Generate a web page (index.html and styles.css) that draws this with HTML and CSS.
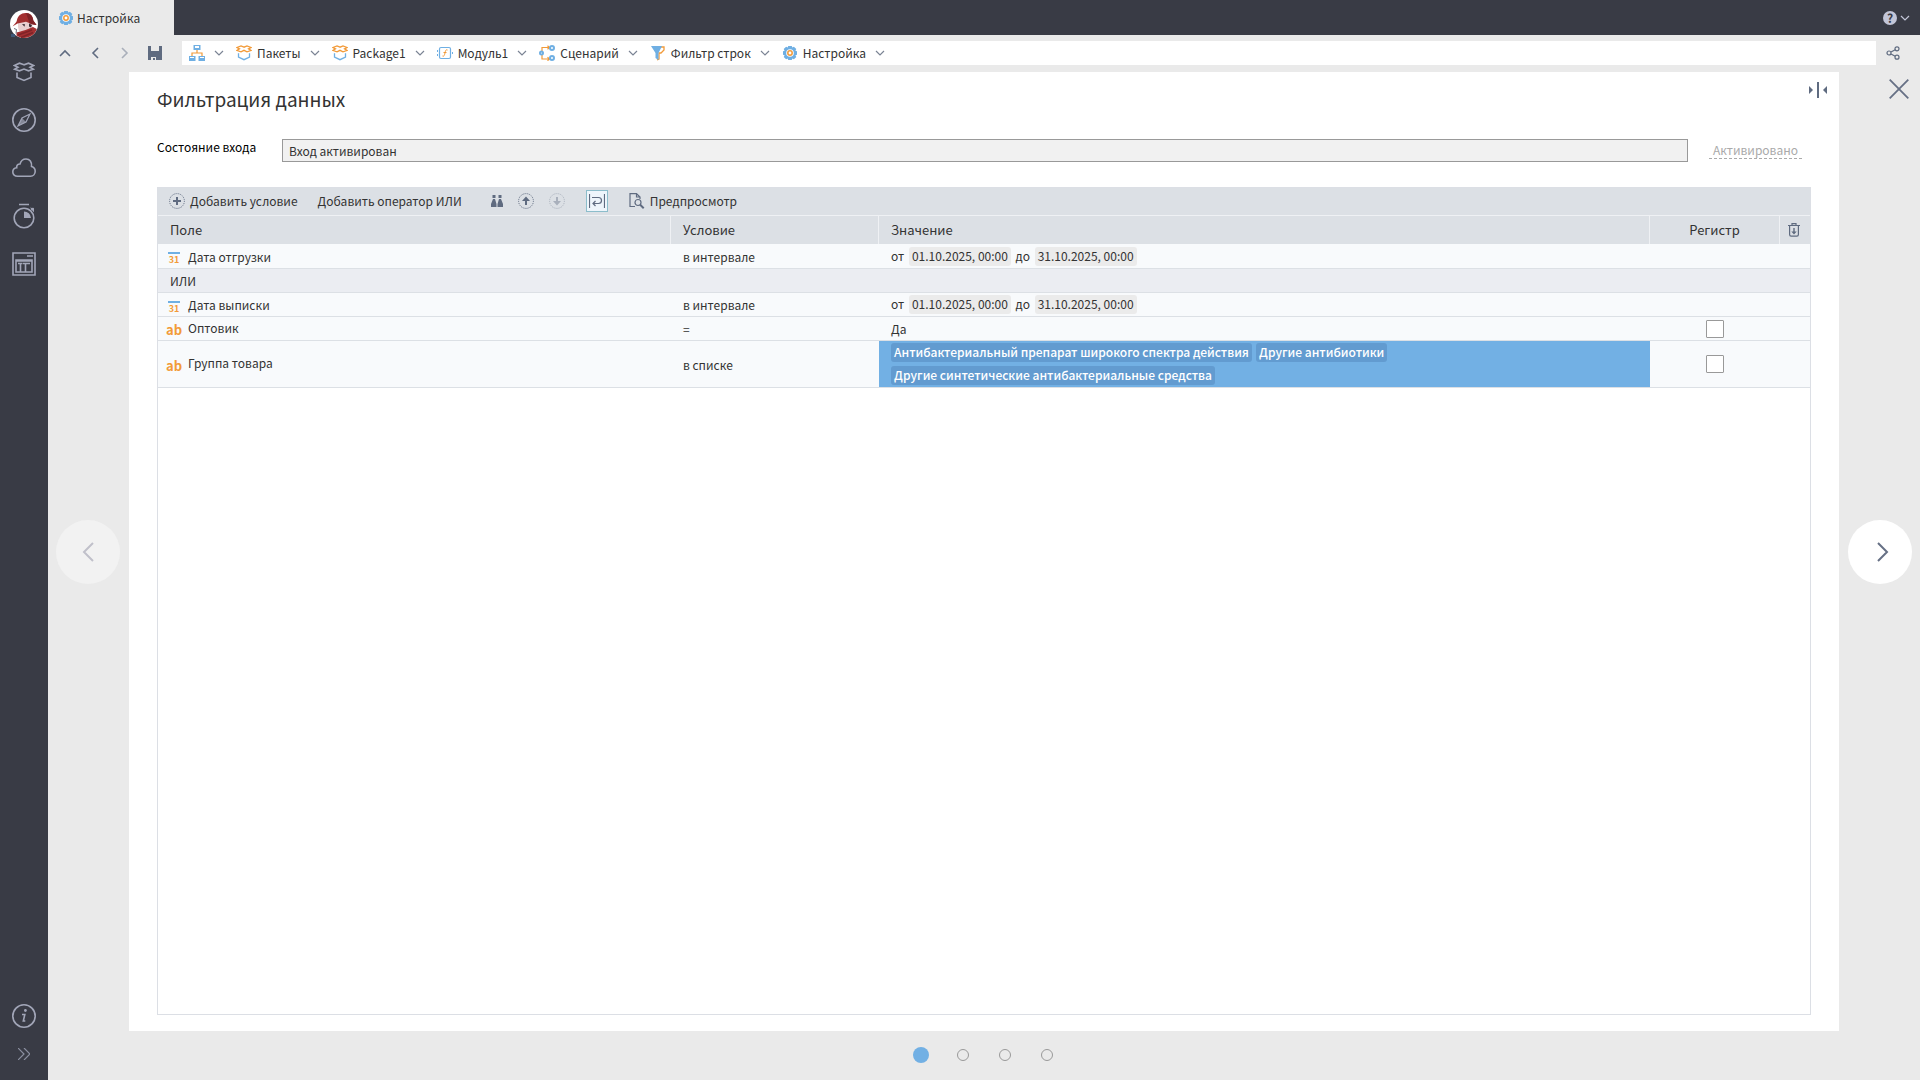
FILE: index.html
```html
<!DOCTYPE html>
<html lang="ru">
<head>
  <meta charset="UTF-8">
  <meta name="viewport" content="width=device-width, initial-scale=1.0">
  <title>Настройка</title>
  <link rel="stylesheet" href="styles.css">
</head>
<body>
<div class="app">
  <nav class="sidebar">
    <a href="#" class="side-item" aria-label="Главная">
      <svg width="28" height="28" viewBox="0 0 28 28">
        <circle cx="14" cy="14" r="14" fill="#fff"/>
        <path d="M8 13l6-2 8 3 1 4-6 4-8-1-1-4z" fill="#e9cfd0"/>
        <path d="M2.500 16.500C5 13.500 6.500 12.500 7 10c.8-4 4-6.800 8.500-7 4.500-.2 7.500 3 7.800 7.500l3.200 4.500-4.500-.8-6-2.500-8.500 1.800z" fill="#a32f31"/>
        <path d="M16 3c4 0 7 3 7.300 7.500l3.200 4.500-4.500-.8-2.500-1z" fill="#7f2327"/>
        <path d="M12 14l3 .2-.5 2.500zM19 13.500l3 1.500-1 2.500-2-1z" fill="#3b2c35"/>
        <path d="M6.500 22.500l9-2.500 7.500-3 3.800 2C25 24.500 20 28 14 28c-3 0-5.500-1-7.500-2.500z" fill="#a32f31"/>
        <path d="M8 25l14-5M11 27.500l12-5" stroke="#7f2327" fill="none"/>
        <path d="M4 18.500l2.500 1-.5 4" fill="none" stroke="#4a4a5a" stroke-width=".8"/>
        <path d="M1 24h4v3H1z" fill="#3d5878"/>
      </svg>
    </a>
    <a href="#" class="side-item" aria-label="Пакеты">
      <svg width="22" height="20" viewBox="0 0 22 20"><path d="M11 2.800L6.500 1.200 1.500 3.500 5 5.200 1.500 7.200l5 1.600L11 7l4.500 1.800 5-1.600L17 5.200l3.500-1.700-5-2.300zM4 10.500v5l7 3 7-3v-5"/></svg>
    </a>
    <a href="#" class="side-item" aria-label="Сценарии">
      <svg width="24" height="24" viewBox="0 0 24 24"><circle cx="12" cy="12" r="11.200"/><path d="M18 6l-4 8-8 4 4-8z" stroke-width="1.200"/><path d="M10 10l4 4-8 4z" fill="currentColor" stroke="none" opacity=".7"/></svg>
    </a>
    <a href="#" class="side-item" aria-label="Облако">
      <svg width="24" height="20" viewBox="0 0 24 20"><path d="M5.500 18.200C2.800 18.200.8 16.500.8 14c0-2.300 1.500-4 3.900-4.300-.3-2 1-3.800 3.300-3.700C8.800 3 11 1 14 1c3.800 0 6 3 5.500 7.500 2.500.7 3.700 2.600 3.700 4.700 0 2.800-1.900 5-4.700 5z"/></svg>
    </a>
    <a href="#" class="side-item" aria-label="Расписание">
      <svg width="24" height="26" viewBox="0 0 24 26"><circle cx="12" cy="15" r="9.800"/><path d="M7 1.500h10M19.500 7l2-2"/><path d="M12 8.500V15h7a7 7 0 0 0-7-6.500zM18 4.500l4 1v4z" fill="currentColor" stroke="none"/></svg>
    </a>
    <a href="#" class="side-item" aria-label="Таблицы">
      <svg width="24" height="24" viewBox="0 0 24 24"><path d="M1 1h22v22H1zM4 8v12h16V8zM4 9h16M8.500 20v-8.500h2M13.500 20v-8.500h2M18 11.500h-2.500M15 4h6M6 11.500h2.500M11 11.500h2.500"/></svg>
    </a>
    <a href="#" class="side-item side-info" aria-label="Информация">
      <svg width="24" height="24" viewBox="0 0 24 24"><circle cx="12" cy="12" r="11.200"/><circle cx="13.400" cy="6.500" r="1.400" fill="currentColor" stroke="none"/><path d="M10 10.500h2.800l-1.500 6.500h2"/></svg>
    </a>
    <button class="side-expand" aria-label="Развернуть">
      <svg width="12" height="12" viewBox="0 0 12 12"><path d="M0 0l6 6-6 6M6 0l6 6-6 6" fill="none" stroke="currentColor" stroke-width="1.200"/></svg>
    </button>
  </nav>

  <div class="workspace">
    <header class="topbar">
      <a href="#" class="tab"><svg width="16" height="16"><use href="#i-gear"/></svg>Настройка</a>
      <button class="help" aria-label="Справка">
        <span class="help-mark">?</span>
        <svg width="10" height="6"><use href="#i-down"/></svg>
      </button>
    </header>

    <div class="navbar">
      <button class="nav-btn" aria-label="Вверх"><svg width="12" height="8" viewBox="0 0 12 8"><path d="M1 7l5-5 5 5"/></svg></button>
      <button class="nav-btn" aria-label="Назад"><svg width="8" height="12" viewBox="0 0 8 12"><path d="M7 1L2 6l5 5"/></svg></button>
      <button class="nav-btn" aria-label="Вперёд" disabled><svg width="8" height="12" viewBox="0 0 8 12"><path d="M1 1l5 5-5 5"/></svg></button>
      <button class="nav-btn" aria-label="Сохранить"><svg width="14" height="14" viewBox="0 0 14 14"><path d="M0 0h3v5h8V0h3v14h-3v-4H3v4H0z" fill="currentColor" stroke="none"/><path d="M5 12h2v2H5zM8 10h3v4H8zM3 10h8v1H3z" fill="currentColor" stroke="none"/></svg></button>

      <nav class="crumbs">
        <button class="crumb" aria-label="Дерево">
          <svg width="16" height="16" viewBox="0 0 16 16"><path d="M8 5v3M3 11V8h10v3" fill="none" stroke="#f29a38" stroke-width="1.200"/><path d="M4.500 0h7v5h-7zM0 11h6.500v5H0zM9.500 11H16v5H9.500z" fill="#6fafe3"/><path d="M6 1h4v2H6zM1 12h4v1H1zM11 12h4v1h-4z" fill="#fff"/></svg>
          <svg class="arrow" width="10" height="6"><use href="#i-down"/></svg>
        </button>
        <button class="crumb"><svg width="16" height="16"><use href="#i-package"/></svg>Пакеты<svg class="arrow" width="10" height="6"><use href="#i-down"/></svg></button>
        <button class="crumb"><svg width="16" height="16"><use href="#i-package"/></svg>Package1<svg class="arrow" width="10" height="6"><use href="#i-down"/></svg></button>
        <button class="crumb">
          <svg width="16" height="16" viewBox="0 0 16 16"><rect x="2.500" y="2.500" width="11" height="11" rx="1.500" fill="none" stroke="#6fafe3" stroke-width="1.200"/><path d="M0 5h1v2H0zM0 9h1v2H0zM15 7h1v2h-1z" fill="#6fafe3"/><path d="M10.500 5c-2-.8-2 1-2.500 3s-.8 3.800-2.500 3M6.500 7.500h3" fill="none" stroke="#f29a38"/></svg>Модуль1<svg class="arrow" width="10" height="6"><use href="#i-down"/></svg>
        </button>
        <button class="crumb">
          <svg width="16" height="16" viewBox="0 0 16 16"><path d="M3 6V2.500h7M3 10v4h7M8.500.8l2 1.700-2 1.700M8.500 12.300l2 1.700-2 1.700" fill="none" stroke="#f29a38" stroke-width="1.200"/><g fill="#fff" stroke="#6fafe3" stroke-width="2"><circle cx="2.500" cy="8" r="1.500"/><circle cx="13" cy="3" r="2"/><circle cx="13" cy="13" r="2"/></g></svg>Сценарий<svg class="arrow" width="10" height="6"><use href="#i-down"/></svg>
        </button>
        <button class="crumb">
          <svg width="16" height="16" viewBox="0 0 16 16"><path d="M10 2h4v3l-3 3H9v6l-2 1" fill="none" stroke="#f29a38" stroke-width="1.300"/><path d="M1 1h11L8.500 8v7L5.500 13V8z" fill="#6fafe3"/></svg>Фильтр строк<svg class="arrow" width="10" height="6"><use href="#i-down"/></svg>
        </button>
        <button class="crumb"><svg width="16" height="16"><use href="#i-gear"/></svg>Настройка<svg class="arrow" width="10" height="6"><use href="#i-down"/></svg></button>
      </nav>

      <button class="share" aria-label="Поделиться">
        <svg width="14" height="14" viewBox="0 0 14 14"><g fill="none" stroke="currentColor" stroke-width="1.200"><circle cx="3" cy="7" r="2"/><circle cx="11" cy="2.800" r="2"/><circle cx="11" cy="11.200" r="2"/><path d="M5 6l4.200-2.300M5 8l4.200 2.300"/></g></svg>
      </button>
    </div>

    <div class="stage">
      <div class="side-col">
        <button class="step" aria-label="Предыдущий шаг" disabled><svg width="12" height="20" viewBox="0 0 12 20"><path d="M11 1l-9 9 9 9"/></svg></button>
      </div>

      <main class="page">
        <div class="page-head">
          <h1>Фильтрация данных</h1>
          <button class="fit" aria-label="Ширина">
            <svg width="20" height="16" viewBox="0 0 20 16"><path d="M9 0h2v16H9zM1 4l4 4-4 4zM19 4l-4 4 4 4z" fill="currentColor"/></svg>
          </button>
        </div>

        <div class="state-row">
          <label for="input-state">Состояние входа</label>
          <input type="text" id="input-state" value="Вход активирован" readonly>
          <button class="activate" disabled>Активировано</button>
        </div>

        <section class="grid">
          <div class="toolbar">
            <button class="tool"><svg width="16" height="16" viewBox="0 0 16 16"><circle class="dots" cx="8" cy="8" r="7.400"/><path d="M7 4h2v3h3v2H9v3H7V9H4V7h3z" fill="currentColor"/></svg>Добавить условие</button>
            <button class="tool tool-or">Добавить оператор ИЛИ</button>
            <button class="tool tool-people" aria-label="Найти"><svg width="12" height="12" viewBox="0 0 12 12"><path d="M1.500 0h3v3h-3zM7.500 0h3v3h-3zM2 4h2l1.500 5v3H0V9zM8 4h2l2 5v3H6.500V9z" fill="currentColor"/></svg></button>
            <button class="tool tool-move" aria-label="Выше"><svg width="16" height="16" viewBox="0 0 16 16"><circle class="dots" cx="8" cy="8" r="7.400"/><path d="M8 3.500L12 8H9v4H7V8H4z" fill="currentColor"/></svg></button>
            <button class="tool tool-move" aria-label="Ниже" disabled><svg width="16" height="16" viewBox="0 0 16 16"><circle class="dots" cx="8" cy="8" r="7.400"/><path d="M8 12.500L4 8h3V4h2v4h3z" fill="currentColor"/></svg></button>
            <button class="tool tool-wrap" aria-label="Перенос" aria-pressed="true"><svg width="16" height="14" viewBox="0 0 16 14"><path d="M.5 0v14M15.500 0v14M3 3.500h6.500a3 3 0 0 1 0 6H4M6.500 7L4 9.500 6.500 12" fill="none" stroke="currentColor" stroke-width="1.200"/></svg></button>
            <button class="tool tool-preview"><svg width="16" height="16" viewBox="0 0 16 16"><path d="M6 13.500H1V.6h6.500L11 4v2M7.500.6V4H11" fill="none" stroke="currentColor" stroke-width="1.200"/><circle cx="9" cy="9.500" r="3" fill="none" stroke="currentColor" stroke-width="1.200"/><path d="M11.200 11.800l3.500 3.500" stroke="currentColor" stroke-width="2"/></svg>Предпросмотр</button>
          </div>

          <table>
            <colgroup>
              <col class="col-field"><col class="col-cond"><col><col class="col-case"><col class="col-del">
            </colgroup>
            <thead>
              <tr>
                <th>Поле</th>
                <th>Условие</th>
                <th>Значение</th>
                <th class="center">Регистр</th>
                <th class="del"><button aria-label="Удалить все"><svg width="12" height="14" viewBox="0 0 12 14"><path d="M0 2.500h12M4 2V.6h4V2M1.600 3v8.500q0 1.700 1.500 1.700h5.800q1.500 0 1.500-1.700V3" fill="none" stroke="currentColor" stroke-width="1.200"/><path d="M5.300 5h1.400v3.500h2L6 11.500 3.300 8.500h2z" fill="currentColor"/></svg></button></th>
              </tr>
            </thead>
            <tbody>
              <tr>
                <td class="field"><svg width="12" height="12"><use href="#i-date"/></svg>Дата отгрузки</td>
                <td>в интервале</td>
                <td>от <span class="chip">01.10.2025, 00:00</span> до <span class="chip">31.10.2025, 00:00</span></td>
                <td></td>
                <td></td>
              </tr>
              <tr class="or-row"><td colspan="5">ИЛИ</td></tr>
              <tr>
                <td class="field"><svg width="12" height="12"><use href="#i-date"/></svg>Дата выписки</td>
                <td>в интервале</td>
                <td>от <span class="chip">01.10.2025, 00:00</span> до <span class="chip">31.10.2025, 00:00</span></td>
                <td></td>
                <td></td>
              </tr>
              <tr>
                <td class="field"><span class="type">ab</span>Оптовик</td>
                <td>=</td>
                <td>Да</td>
                <td class="center"><input type="checkbox" aria-label="Регистр: Оптовик"></td>
                <td></td>
              </tr>
              <tr>
                <td class="field"><span class="type">ab</span>Группа товара</td>
                <td>в списке</td>
                <td class="selected">
                  <div class="chips">
                    <span class="chip">Антибактериальный препарат широкого спектра действия</span>
                    <span class="chip">Другие антибиотики</span>
                    <span class="chip">Другие синтетические антибактериальные средства</span>
                  </div>
                </td>
                <td class="center"><input type="checkbox" aria-label="Регистр: Группа товара"></td>
                <td></td>
              </tr>
            </tbody>
          </table>
        </section>
      </main>

      <div class="side-col side-right">
        <button class="close" aria-label="Закрыть"><svg width="20" height="20" viewBox="0 0 20 20"><path d="M.7.700l18.600 18.600M19.300.7L.7 19.300" stroke="currentColor" stroke-width="1.800"/></svg></button>
        <button class="step next" aria-label="Следующий шаг"><svg width="12" height="20" viewBox="0 0 12 20"><path d="M1 1l9 9-9 9"/></svg></button>
      </div>
    </div>

    <footer class="pager">
      <button class="dot active" aria-label="Шаг 1"></button>
      <button class="dot" aria-label="Шаг 2"></button>
      <button class="dot" aria-label="Шаг 3"></button>
      <button class="dot" aria-label="Шаг 4"></button>
    </footer>
  </div>
</div>

<!-- shared icons -->
<svg width="0" height="0" aria-hidden="true">
  <defs>
    <symbol id="i-down" viewBox="0 0 10 6"><path d="M1 1l4 4 4-4" fill="none" stroke="currentColor" stroke-width="1.200"/></symbol>
    <symbol id="i-gear" viewBox="0 0 16 16">
      <path d="M6.200 1h3.600l.5 1.600 1.600-.9 2.400 2.400-.9 1.600 1.600.5v3.600l-1.600.5.9 1.600-2.400 2.400-1.600-.9-.5 1.600H6.200l-.5-1.600-1.600.9-2.400-2.400.9-1.600L1 9.800V6.200l1.600-.5-.9-1.600 2.400-2.400 1.600.9z" fill="#6fafe3"/>
      <circle cx="8" cy="8" r="3.800" fill="#fff"/>
      <circle cx="8" cy="8" r="2.200" fill="#fff" stroke="#f29a38" stroke-width="1.500"/>
    </symbol>
    <symbol id="i-package" viewBox="0 0 16 16">
      <path d="M8 2.200L5 .9 1 2.500l2.500 1.400L1 5.500l4 1.300 3-1.500 3 1.500 4-1.300-2.500-1.600L15 2.500 11 .9z" fill="none" stroke="#f29a38" stroke-width="1.300"/>
      <path d="M2.500 8.200v3.900L8 14.700l5.500-2.600V8.200" fill="none" stroke="#6fafe3" stroke-width="1.300"/>
    </symbol>
    <symbol id="i-date" viewBox="0 0 12 12">
      <path d="M0 0h12v2H0z" fill="#6fafe3"/>
      <text x="6" y="11" text-anchor="middle" font-size="9" font-weight="700" fill="#f29a38">31</text>
    </symbol>
  </defs>
</svg>

</body>
</html>
```
FILE: styles.css
```css
* { box-sizing: border-box; }
body { margin: 0; font: 12px/18px "Noto Sans CJK SC", "Noto Sans", sans-serif; color: #333; background: #eaeaea; }
button, input { font: inherit; color: inherit; }
button { padding: 0; border: 0; background: none; cursor: pointer; }
a { color: inherit; text-decoration: none; }
svg { flex: none; display: block; }

.app { display: flex; min-height: 100vh; }

/* left menu */
.sidebar { width: 48px; flex: none; display: flex; flex-direction: column; padding-bottom: 12px; background: #393b45; color: #a2a6b8; }
.side-item { height: 48px; display: flex; align-items: center; justify-content: center; }
.side-item svg { fill: none; stroke: currentColor; stroke-width: 1.6; }
.side-item:first-child svg { stroke: none; }
.side-info { margin-top: auto; }
.side-expand { height: 28px; display: flex; align-items: center; justify-content: center; color: #8b8fa0; }

.workspace { flex: 1; min-width: 0; display: flex; flex-direction: column; }

.topbar { height: 35px; display: flex; justify-content: space-between; background: #393b45; }
.tab { width: 126px; display: flex; align-items: center; gap: 3px; padding-left: 10px; background: #eaeaea; }
.help { display: flex; align-items: center; gap: 3px; padding-right: 10px; color: #c3c6d8; }
.help-mark { width: 14px; height: 14px; border-radius: 50%; background: #c3c6d8; color: #393b45; line-height: 14px; font-weight: 700; }

/* navigation and path */
.navbar { height: 37px; display: flex; align-items: center; padding: 0 0 1px 2px; color: #5f6b80; }
.nav-btn { width: 30px; height: 24px; display: flex; align-items: center; justify-content: center; }
.nav-btn svg { fill: none; stroke: currentColor; stroke-width: 1.6; }
.nav-btn:disabled { color: #a9afba; }
.crumbs { flex: 1; height: 24px; margin-left: 12px; padding-left: 7px; display: flex; align-items: center; gap: 12px; background: #fff; color: #333; }
.crumb { height: 22px; display: flex; align-items: center; gap: 5px; line-height: 16px; }
.crumb .arrow { margin-left: 4px; color: #7b8494; }
.share { width: 44px; padding-left: 10px; }

.stage { flex: 1; display: flex; }
.side-col { width: 81px; flex: none; display: grid; grid-template-rows: 1fr auto 1fr; justify-items: start; padding-left: 8px; }
.side-right { padding-left: 9px; }
.step { grid-row: 2; width: 64px; height: 64px; border-radius: 50%; background: #fff; color: #667085; display: flex; align-items: center; justify-content: center; }
.step svg { fill: none; stroke: currentColor; stroke-width: 2; }
.step:disabled { background: #f2f2f2; color: #c0c0ca; }
.step.next { padding-left: 6px; }
.close { grid-row: 1; align-self: start; justify-self: end; margin: 7px 11px 0 0; color: #667085; }

.page { flex: 1; min-width: 0; display: flex; flex-direction: column; padding: 10px 28px 16px; background: #fff; }
.page-head { display: flex; justify-content: space-between; align-items: flex-start; margin-right: -17px; }
h1 { margin: 2px 0 0; font-size: 19px; line-height: 30px; font-weight: 400; }
.fit { color: #5f6b80; }

.state-row { display: flex; margin-top: 25px; }
.state-row label { width: 125px; color: #000; line-height: 16px; }
.state-row input { flex: 1; min-width: 0; height: 23px; padding: 0 6px; border: 1px solid #999; background: #f1f1f1; }
.activate { align-self: center; margin: 0 9px 0 21px; padding: 0 4px; border-bottom: 1px dashed #aaa; color: #aaa; line-height: 16px; }

/* conditions */
.grid { flex: 1; display: flex; flex-direction: column; margin-top: 25px; border: 1px solid #dcdfe5; }
.toolbar { height: 27px; display: flex; align-items: center; padding: 0 0 1px 11px; background: #dce0e5; }
.tool { height: 22px; display: flex; align-items: center; justify-content: center; gap: 5px; line-height: 16px; }
.tool svg { color: #5f6b80; }
.dots { fill: none; stroke: currentColor; stroke-dasharray: 1 1; }
.tool-or { margin-left: 20px; }
.tool-people { margin-left: 29px; }
.tool-move { margin-left: 15px; }
.tool-move:disabled { opacity: .4; }
.tool-wrap { width: 22px; margin: 0 21px; border: 1px solid #8cbdcb; background: #eef5fb; }

table { width: 100%; table-layout: fixed; border-collapse: separate; border-spacing: 0; }
.col-field { width: 513px; }
.col-cond { width: 208px; }
.col-case { width: 130px; }
.col-del { width: 30px; }
th { height: 29px; padding: 0 12px; border-top: 1px solid #eff1f4; border-right: 1px solid #eff1f4; background: #dce0e5; font-size: 13px; font-weight: 400; text-align: left; }
th:last-child { border-right: 0; }
td { height: 24px; padding: 0 12px; border-bottom: 1px solid #dce0e5; background: #f8fafc; line-height: 17px; }
tbody tr:first-child td { height: 25px; }
.field { padding-left: 10px; }
.field svg, .type { display: inline-block; vertical-align: middle; width: 12px; margin-right: 8px; }
.type { width: 16px; margin: 0 6px 0 -2px; color: #f29a38; font-size: 13px; font-weight: 700; }
.or-row td { background: #ebedf2; }
th.center, td.center { padding: 0; text-align: center; }
th.del { padding: 0 3px 0 0; }
.del button { display: block; margin: 0 auto; color: #5f6b80; }
.chip { display: inline-block; margin: 0 2px; padding: 0 3px 2px; border-radius: 3px; background: #ebebeb; }
td.selected { padding: 2px 12px; background: #72b0e4; color: #fff; font-weight: 500; }
.chips { display: flex; flex-wrap: wrap; gap: 4px; }
.chips .chip { margin: 0; background: #629bd0; }
input[type="checkbox"] { appearance: none; display: block; width: 18px; height: 18px; margin: 0 auto; border: 1px solid #999; border-radius: 1px; background: #fff; }

.pager { height: 49px; display: flex; align-items: center; justify-content: center; gap: 30px; padding-bottom: 1px; }
.dot { width: 12px; height: 12px; border: 1px solid #999; border-radius: 50%; }
.dot.active { width: 16px; height: 16px; margin: 0 -2px; border: 0; background: #72b0e4; }
```
